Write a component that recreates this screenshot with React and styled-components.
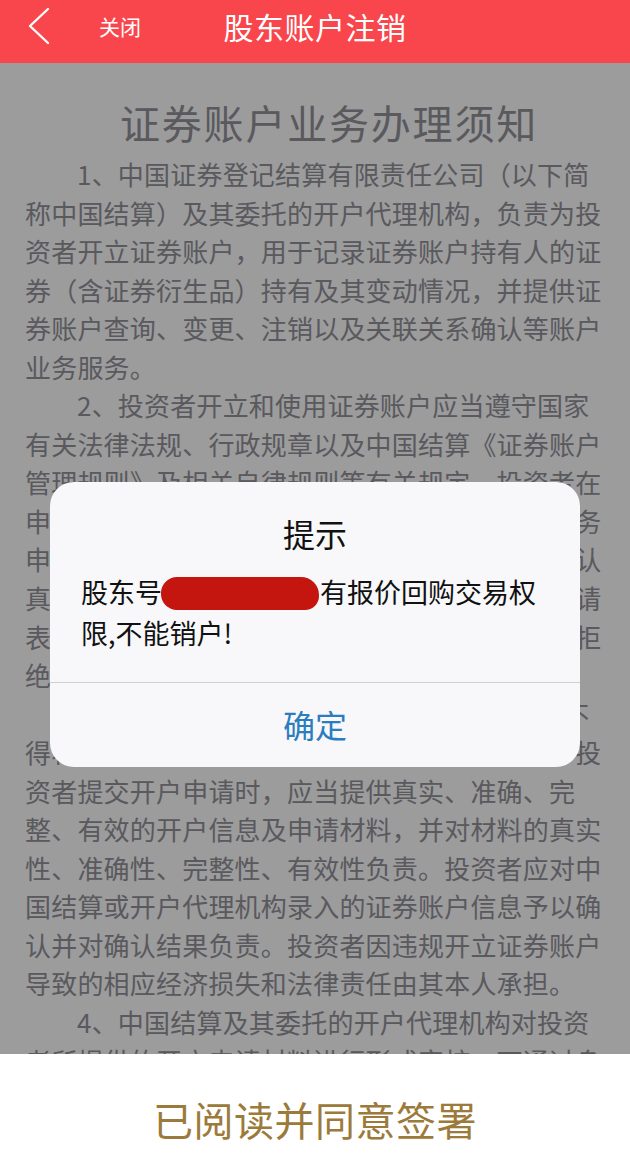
import React from 'react';
import styled, { createGlobalStyle } from 'styled-components';

const GlobalStyle = createGlobalStyle`
  html, body {
    margin: 0;
    padding: 0;
    background: #fff;
  }
  * {
    box-sizing: border-box;
  }
`;

const Screen = styled.div`
  width: 630px;
  height: 1159px;
  display: flex;
  flex-direction: column;
  overflow: hidden;
  font-family: "Noto Sans CJK SC", "Noto Sans", sans-serif;
`;

const Header = styled.header`
  flex: 0 0 63px;
  display: grid;
  grid-template-columns: 1fr auto 1fr;
  align-items: center;
  padding-bottom: 11px;
  background: #f8464c;
  color: #fff;
`;

const HeaderLeft = styled.div`
  display: flex;
  align-items: center;
  gap: 49px;
  padding-left: 28px;
`;

const BackIcon = styled.svg`
  display: block;
  width: 22px;
  height: 38px;
`;

const CloseText = styled.span`
  font-size: 21px;
  line-height: 1;
`;

const HeaderTitle = styled.h1`
  margin: 0;
  font-size: 30px;
  font-weight: 400;
  line-height: 1;
  letter-spacing: 0.5px;
`;

const Content = styled.main`
  flex: 1;
  position: relative;
  overflow: hidden;
  background: #fff;
  padding: 33px 27px 0 25px;
  color: #939297;
`;

const DocTitle = styled.h2`
  margin: 0 0 7px;
  padding-left: 30px;
  text-align: center;
  font-size: 40px;
  font-weight: 400;
  line-height: 52px;
  letter-spacing: 1.8px;
`;

const Line = styled.div`
  font-size: 26px;
  line-height: 38.55px;
  letter-spacing: 0.2px;
  white-space: nowrap;
  padding-left: ${(p) => (p.$indent ? '52px' : '0')};
`;

const Overlay = styled.div`
  position: absolute;
  inset: 0;
  background: rgba(0, 0, 2, 0.39);
  display: flex;
  justify-content: center;
  align-items: flex-start;
  padding-top: 419px;
`;

const Dialog = styled.div`
  width: 530px;
  background: #f8f8fa;
  border-radius: 24px;
  overflow: hidden;
  color: #111;
`;

const DialogTitle = styled.div`
  padding-top: 29px;
  text-align: center;
  font-size: 32px;
  line-height: 44px;
`;

const DialogMessage = styled.div`
  padding: 16px 20px 29px 31px;
  font-size: 27px;
  line-height: 41px;
`;

const Redacted = styled.span`
  display: inline-block;
  width: 158px;
  height: 33px;
  margin: 0 1px 0 -1px;
  vertical-align: -7px;
  border-radius: 16px 18px 14px 16px;
  background: #c4160f;
`;

const DialogButton = styled.button`
  display: block;
  width: 100%;
  height: 85px;
  border: 0;
  border-top: 1px solid #cfcfd3;
  background: transparent;
  color: #2b7dc0;
  font-family: inherit;
  font-size: 32px;
  line-height: 1;
  padding: 0 0 2px;
`;

const Footer = styled.footer`
  flex: 0 0 105px;
  display: flex;
  justify-content: center;
  align-items: center;
  padding-top: 24px;
  background: #fff;
`;

const SignText = styled.span`
  font-size: 40px;
  line-height: 1;
  color: #9b7a3b;
  letter-spacing: 0.5px;
`;

const paragraphs = [
  [
    '1、中国证券登记结算有限责任公司（以下简',
    '称中国结算）及其委托的开户代理机构，负责为投',
    '资者开立证券账户，用于记录证券账户持有人的证',
    '券（含证券衍生品）持有及其变动情况，并提供证',
    '券账户查询、变更、注销以及关联关系确认等账户',
    '业务服务。',
  ],
  [
    '2、投资者开立和使用证券账户应当遵守国家',
    '有关法律法规、行政规章以及中国结算《证券账户',
    '管理规则》及相关自律规则等有关规定。投资者在',
    '申请证券账户时，应当认真阅读本须知及相关业务',
    '申请表中的各项相关条款，如实填写申请表并确认',
    '真实有效后签字。对于不符合开户条件的开户申请',
    '表或提交的材料不齐全的，开户代理机构均有权拒',
    '绝办理。',
  ],
  [
    '3、投资者应当使用实名开立的证券账户，不',
    '得将证券账户出借给他人或使用他人证券账户。投',
    '资者提交开户申请时，应当提供真实、准确、完',
    '整、有效的开户信息及申请材料，并对材料的真实',
    '性、准确性、完整性、有效性负责。投资者应对中',
    '国结算或开户代理机构录入的证券账户信息予以确',
    '认并对确认结果负责。投资者因违规开立证券账户',
    '导致的相应经济损失和法律责任由其本人承担。',
  ],
  [
    '4、中国结算及其委托的开户代理机构对投资',
    '者所提供的开户申请材料进行形式审核，可通过身',
    '份证件联网核查等方式对投资者身份进行核实。',
  ],
];

export default function App() {
  return (
    <>
      <GlobalStyle />
      <Screen>
        <Header>
          <HeaderLeft>
            <BackIcon viewBox="0 0 22 38" fill="none">
              <polyline
                points="20,2 2,19 20,36"
                stroke="#fff"
                strokeWidth="2.4"
                strokeLinecap="round"
                strokeLinejoin="round"
              />
            </BackIcon>
            <CloseText>关闭</CloseText>
          </HeaderLeft>
          <HeaderTitle>股东账户注销</HeaderTitle>
          <div />
        </Header>

        <Content>
          <DocTitle>证券账户业务办理须知</DocTitle>
          {paragraphs.map((lines, i) =>
            lines.map((text, j) => (
              <Line key={`${i}-${j}`} $indent={j === 0}>
                {text}
              </Line>
            ))
          )}

          <Overlay>
            <Dialog>
              <DialogTitle>提示</DialogTitle>
              <DialogMessage>
                股东号<Redacted />有报价回购交易权
                <br />
                限,不能销户!
              </DialogMessage>
              <DialogButton type="button">确定</DialogButton>
            </Dialog>
          </Overlay>
        </Content>

        <Footer>
          <SignText>已阅读并同意签署</SignText>
        </Footer>
      </Screen>
    </>
  );
}
